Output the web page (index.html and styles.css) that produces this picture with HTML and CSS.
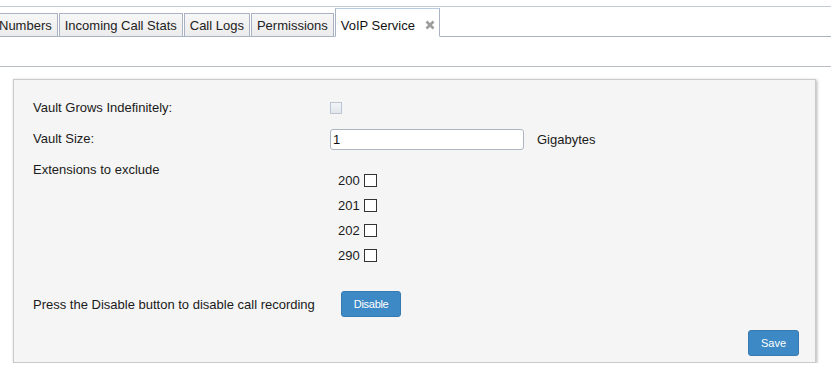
FILE: index.html
```html
<!DOCTYPE html>
<html lang="en">
<head>
  <meta charset="UTF-8">
  <title>VoIP Service</title>
  <link rel="stylesheet" href="styles.css">
</head>
<body>
  <div class="tabbar">
    <ul class="tabs">
      <li class="tab first">Numbers</li>
      <li class="tab">Incoming Call Stats</li>
      <li class="tab">Call Logs</li>
      <li class="tab">Permissions</li>
      <li class="tab active">VoIP Service
        <span class="close"><svg width="10" height="10" viewBox="0 0 10 10"><path d="M1.5 1.5 L8.5 8.5 M8.5 1.5 L1.5 8.5" stroke="#9c9c9c" stroke-width="2.6" fill="none"/></svg></span>
      </li>
    </ul>
  </div>
  <div class="toolbar"></div>

  <main class="panel">
    <div class="form">
      <label class="lbl">Vault Grows Indefinitely:</label>
      <div class="field"><input type="checkbox" class="chk-disabled" disabled></div>

      <label class="lbl">Vault Size:</label>
      <div class="field">
        <input type="text" class="txt" value="1">
        <span class="unit">Gigabytes</span>
      </div>

      <label class="lbl">Extensions to exclude</label>
      <ul class="ext-list">
        <li><span>200</span><input type="checkbox" class="chk"></li>
        <li><span>201</span><input type="checkbox" class="chk"></li>
        <li><span>202</span><input type="checkbox" class="chk"></li>
        <li><span>290</span><input type="checkbox" class="chk"></li>
      </ul>
    </div>

    <div class="disable-row">
      <span>Press the Disable button to disable call recording</span>
      <button type="button" class="btn">Disable</button>
    </div>

    <div class="actions">
      <button type="button" class="btn save">Save</button>
    </div>
  </main>
</body>
</html>
```

FILE: styles.css
```css
html, body {
  margin: 0;
  padding: 0;
  background: #fff;
  font-family: "Liberation Sans", Arial, sans-serif;
  font-size: 13px;
  color: #1a1a1a;
}

/* tabs */
.tabbar {
  margin-top: 6px;
  border-top: 1px solid #c3c8d1;
  overflow: hidden;
}
.tabs {
  list-style: none;
  margin: 0 0 0 -7px;
  padding: 0;
  height: 30px;
  box-sizing: border-box;
  display: flex;
  align-items: flex-end;
  gap: 1px;
  border-bottom: 1px solid #aab3c3;
}
.tab {
  box-sizing: border-box;
  height: 24px;
  margin-bottom: -1px;
  padding: 0 5px;
  display: flex;
  align-items: center;
  border: 1px solid #aab3c3;
  background: linear-gradient(#f7f7f7, #ececec);
  color: #222;
  white-space: nowrap;
}
.tab.active {
  height: 29px;
  padding: 5px 4px 0 5px;
  background: #fff;
  border-top-color: #b9cbe3;
  border-bottom-color: #fff;
  color: #111;
}
.close {
  display: flex;
  margin-left: 10px;
}

.toolbar {
  height: 29px;
  border-bottom: 1px solid #b9bdc5;
}

/* panel */
.panel {
  margin: 12px 15px 0 13px;
  padding: 17px 16px 6px 19px;
  background: #f5f5f5;
  border: 1px solid #cbcbcb;
  box-shadow: 1px 1px 3px rgba(0, 0, 0, .3);
}
.form {
  display: grid;
  grid-template-columns: 297px 1fr;
  row-gap: 9px;
}
.lbl {
  line-height: 22px;
}
.field {
  display: flex;
  align-items: center;
  height: 22px;
}
.chk-disabled {
  appearance: none;
  margin: 0;
  width: 12px;
  height: 12px;
  border: 1px solid #bcc6d3;
  background: linear-gradient(#f2f4f7, #e3e7ec);
}
.txt {
  box-sizing: border-box;
  width: 194px;
  height: 21px;
  margin: 0;
  padding: 0 2px;
  border: 1px solid #aeb5c2;
  border-radius: 3px;
  background: #fff;
  font: inherit;
  color: #111;
}
.unit {
  margin-left: 13px;
}
.ext-list {
  list-style: none;
  margin: 0;
  padding: 9px 0 0 8px;
}
.ext-list li {
  height: 25px;
  display: flex;
  align-items: center;
  gap: 4px;
}
.chk {
  appearance: none;
  margin: 0;
  width: 13px;
  height: 13px;
  border: 1px solid #333;
  background: #fff;
}

.disable-row {
  margin-top: 23px;
  display: flex;
  align-items: center;
  gap: 26px;
}
.btn {
  height: 26px;
  padding: 0 12px;
  border: 1px solid #3779b1;
  border-radius: 3px;
  background: #3d89c6;
  color: #fff;
  font-family: "Liberation Sans", Arial, sans-serif;
  font-size: 11px;
  letter-spacing: -.3px;
  cursor: pointer;
}
.actions {
  margin-top: 13px;
  display: flex;
  justify-content: flex-end;
}
.save {
  width: 51px;
  padding: 0;
  letter-spacing: 0;
}
```
